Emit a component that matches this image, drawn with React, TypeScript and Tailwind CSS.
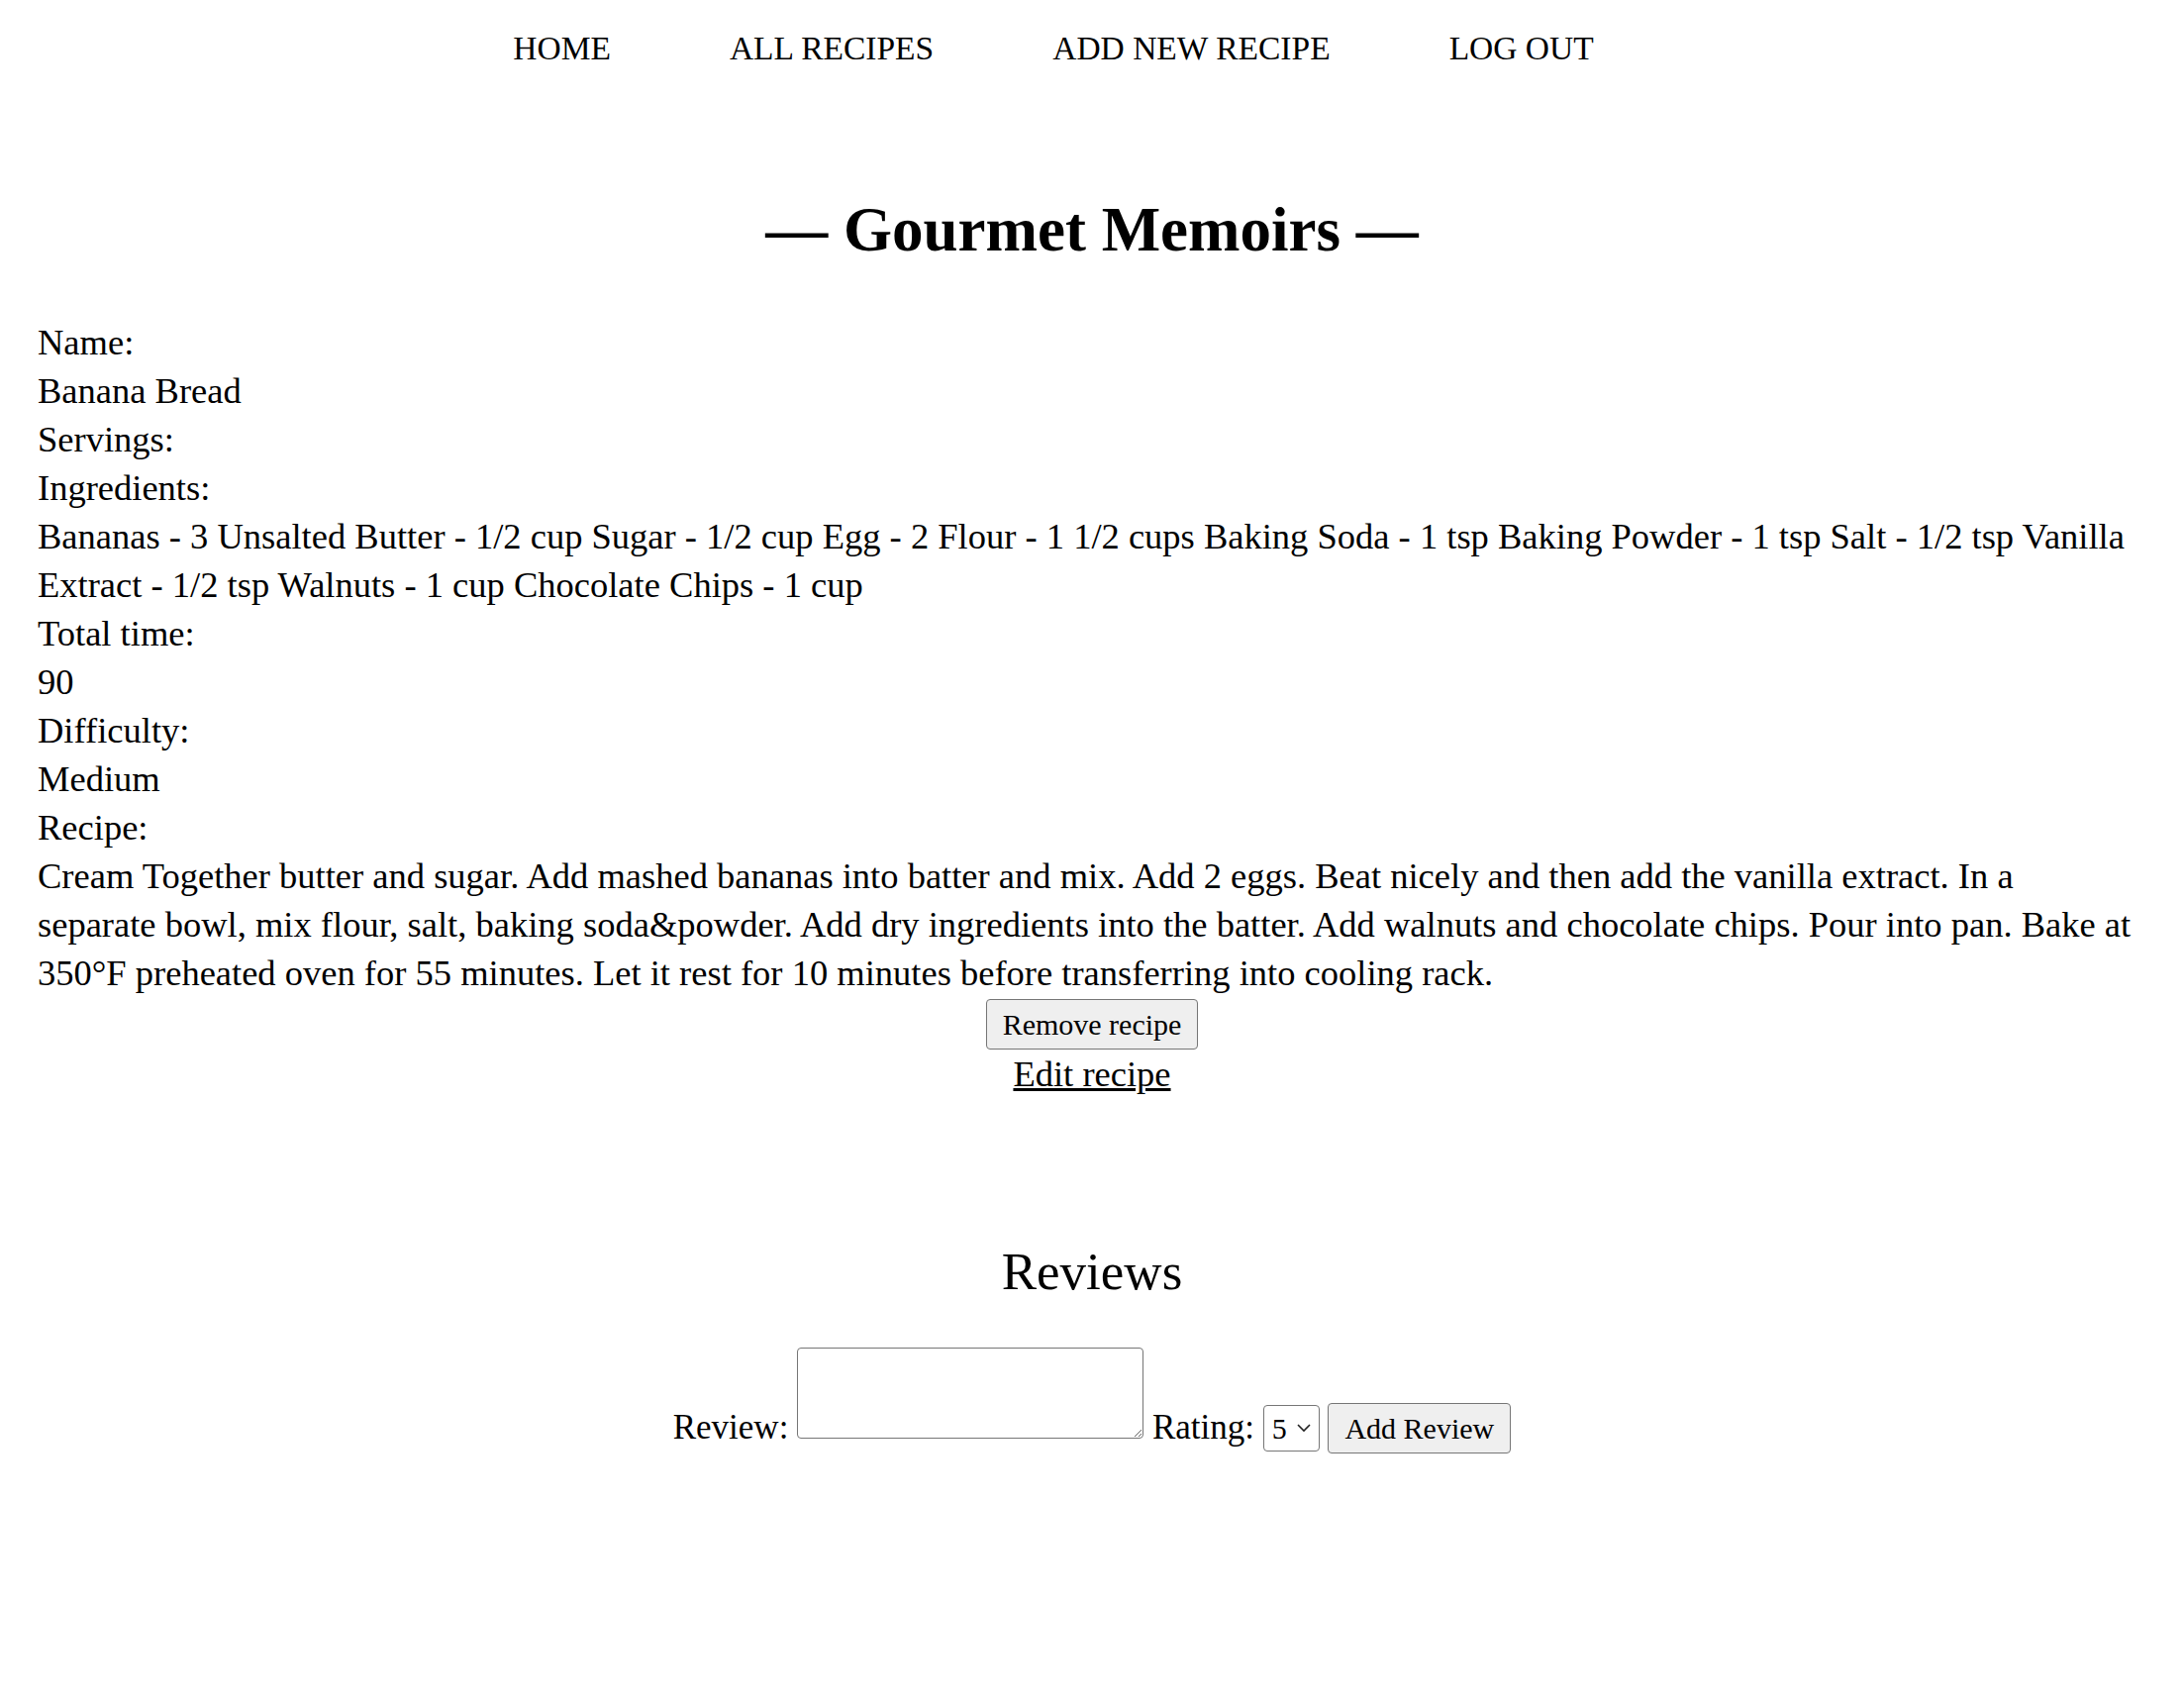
import React from "react";

const serif = { fontFamily: '"Liberation Serif", "Times New Roman", serif' };

export default function App() {
  return (
    <div className="min-h-screen bg-white text-black" style={serif}>
      <nav className="pt-[29px] pr-[78px]">
        <ul className="flex justify-center gap-[120px] text-[33.5px] leading-[40px]">
          <li><a href="#">HOME</a></li>
          <li><a href="#">ALL RECIPES</a></li>
          <li><a href="#">ADD NEW RECIPE</a></li>
          <li><a href="#">LOG OUT</a></li>
        </ul>
      </nav>

      <h1 className="mt-[132px] text-center text-[63px] leading-[63px] font-bold">— Gourmet Memoirs —</h1>

      <main className="mt-[57px] px-[38px] text-[36.5px] leading-[49px]">
        <div className="max-w-[2119px]">
          <div>Name:</div>
          <div>Banana Bread</div>
          <div>Servings:</div>
          <div>Ingredients:</div>
          <div>
            Bananas - 3 Unsalted Butter - 1/2 cup Sugar - 1/2 cup Egg - 2 Flour - 1 1/2 cups Baking Soda - 1 tsp Baking Powder - 1 tsp Salt - 1/2 tsp Vanilla Extract - 1/2 tsp Walnuts - 1 cup Chocolate Chips - 1 cup
          </div>
          <div>Total time:</div>
          <div>90</div>
          <div>Difficulty:</div>
          <div>Medium</div>
          <div>Recipe:</div>
          <div>
            Cream Together butter and sugar. Add mashed bananas into batter and mix. Add 2 eggs. Beat nicely and then add the vanilla extract. In a separate bowl, mix flour, salt, baking soda&amp;powder. Add dry ingredients into the batter. Add walnuts and chocolate chips. Pour into pan. Bake at 350°F preheated oven for 55 minutes. Let it rest for 10 minutes before transferring into cooling rack.
          </div>
        </div>
        <div className="mt-[2px] flex flex-col items-center">
          <button className="rounded-[4px] border border-[#767676] bg-[#efefef] px-[16px] py-[8px] text-[30px] leading-[33px]">
            Remove recipe
          </button>
          <a href="#" className="underline">Edit recipe</a>
        </div>
      </main>

      <h2 className="mt-[149px] text-center text-[53px] leading-[53px]">Reviews</h2>

      <div className="mt-[50px] text-center text-[35px] leading-[49px]">
        <label>Review: </label>
        <textarea className="h-[92px] w-[350px] rounded-[4px] border border-[#767676] align-baseline"></textarea>{" "}
        <label>Rating: </label>
        <span className="relative inline-block">
          <select
            defaultValue="5"
            className="appearance-none rounded-[4px] border border-[#767676] bg-white pl-[8px] pr-[32px] py-[6px] text-[30px] leading-[33px]"
          >
            <option value="1">1</option>
            <option value="2">2</option>
            <option value="3">3</option>
            <option value="4">4</option>
            <option value="5">5</option>
          </select>
          <svg
            className="pointer-events-none absolute right-[9px] top-1/2 -translate-y-1/2"
            width="14"
            height="9"
            viewBox="0 0 14 9"
            fill="none"
            stroke="#222"
            strokeWidth="1.6"
          >
            <path d="M1 1.5 L7 7.5 L13 1.5" />
          </svg>
        </span>{" "}
        <button className="rounded-[4px] border border-[#767676] bg-[#efefef] px-[16px] py-[8px] text-[30px] leading-[33px]">
          Add Review
        </button>
      </div>
    </div>
  );
}
